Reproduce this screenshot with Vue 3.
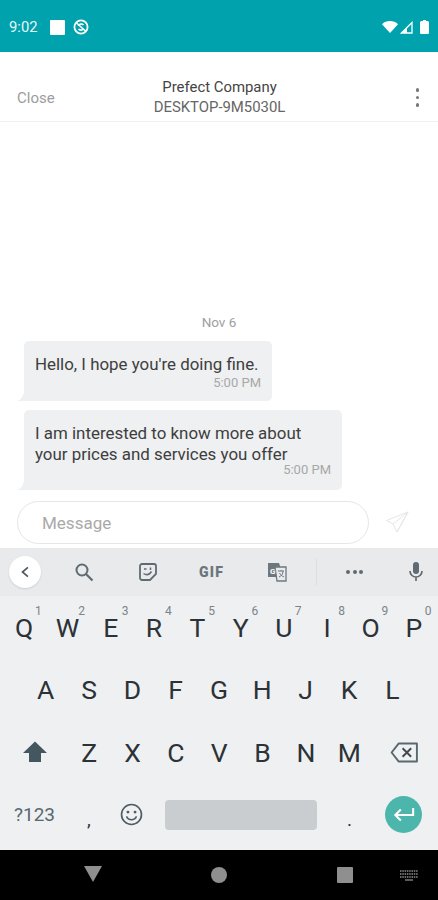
<script setup>
const rows = [
  ['Q', 'W', 'E', 'R', 'T', 'Y', 'U', 'I', 'O', 'P'],
  ['A', 'S', 'D', 'F', 'G', 'H', 'J', 'K', 'L'],
  ['Z', 'X', 'C', 'V', 'B', 'N', 'M']
]
const hints = ['1', '2', '3', '4', '5', '6', '7', '8', '9', '0']
</script>

<template>
  <div class="phone">
    <div class="status">
      <span class="time">9:02</span>
      <span class="square"></span>
      <svg class="sync" viewBox="0 0 16 16" width="16" height="16">
        <circle cx="8" cy="8" r="6.6" fill="none" stroke="#fff" stroke-width="1.8" />
        <path d="M3 3.5l10 9M5.5 7a3 3 0 0 1 5-1M10.500 9.500a3 3 0 0 1-5 .5" fill="none" stroke="#fff" stroke-width="1.6" />
      </svg>
      <span class="spacer"></span>
      <svg viewBox="0 0 16 12" width="16" height="12">
        <path d="M0 3.200C2 1.200 5 0 8 0s6 1.200 8 3.200L8 12z" fill="#fff" />
      </svg>
      <svg class="signal" viewBox="0 0 13 13" width="13" height="13">
        <path d="M12 1.500V12H1.500z" fill="none" stroke="#fff" stroke-width="1.300" />
        <path d="M7 7v5H1.500z" fill="#fff" />
      </svg>
      <svg viewBox="0 0 9 14" width="9" height="14">
        <path d="M3 0h3v1h1.500A1.500 1.500 0 0 1 9 2.500V13a1 1 0 0 1-1 1H1a1 1 0 0 1-1-1V2.500A1.500 1.500 0 0 1 1.500 1H3z" fill="#fff" />
      </svg>
    </div>

    <header class="topbar">
      <span class="close">Close</span>
      <div class="title">
        <span class="company">Prefect Company</span>
        <span class="device">DESKTOP-9M5030L</span>
      </div>
      <div class="dots"><i></i><i></i><i></i></div>
    </header>

    <main class="thread">
      <div class="date">Nov 6</div>
      <div class="bubble first">
        <p>Hello, I hope you're doing fine.</p>
        <time>5:00 PM</time>
      </div>
      <div class="bubble second">
        <p>I am interested to know more about<br />your prices and services you offer</p>
        <time>5:00 PM</time>
      </div>
    </main>

    <div class="composer">
      <div class="input">Message</div>
      <svg class="send" viewBox="0 0 24 24" width="24" height="24">
        <path d="M23 2L1.500 10.500l6.500 3.500 4 8zM8 14L23 2 12 22" fill="none" stroke="#e4e6e8" stroke-width="1" stroke-linejoin="round" />
      </svg>
    </div>

    <section class="keyboard">
      <div class="toolbar">
        <div class="back">
          <svg viewBox="0 0 12 14" width="10" height="12">
            <path d="M9.500 1.500L3 7l6.500 5.500" fill="none" stroke="#50585e" stroke-width="2" />
          </svg>
        </div>
        <svg class="tool search" viewBox="0 0 20 20" width="20" height="20">
          <circle cx="8" cy="8" r="5.500" fill="none" stroke="#5f6b72" stroke-width="2" />
          <path d="M12 12l6.500 6.500" stroke="#5f6b72" stroke-width="2.200" />
        </svg>
        <svg class="tool sticker" viewBox="0 0 20 20" width="20" height="20">
          <path d="M4 2h12a2 2 0 0 1 2 2v8l-6 6H4a2 2 0 0 1-2-2V4a2 2 0 0 1 2-2z" fill="none" stroke="#5f6b72" stroke-width="1.800" />
          <path d="M5.500 11.500c3 2 6 1 8-2M6 7h2.500M12.500 5.500v2.500" fill="none" stroke="#5f6b72" stroke-width="1.500" />
        </svg>
        <span class="gif">GIF</span>
        <svg class="tool translate" viewBox="0 0 20 20" width="20" height="20">
          <path d="M1 1h11l1 3v11H1z" fill="#6d787e" />
          <path d="M8 5h11v14H10z" fill="#e8eaed" stroke="#6d787e" stroke-width="1.300" />
          <text x="3" y="12" font-size="8" font-weight="700" font-family="Roboto, sans-serif" fill="#fff">G</text>
          <path d="M11 9h6M14 8v1M12 15c2.500-1 4-3 4-6M12.500 11c1 2 2.500 3 4.500 4" fill="none" stroke="#6d787e" stroke-width="1" />
        </svg>
        <span class="divider"></span>
        <div class="more"><i></i><i></i><i></i></div>
        <svg class="tool mic" viewBox="0 0 18 22" width="18" height="22">
          <rect x="6" y="1" width="6" height="12" rx="3" fill="#5f6b72" />
          <path d="M3 10a6 6 0 0 0 12 0M9 16v4" fill="none" stroke="#5f6b72" stroke-width="1.700" />
        </svg>
      </div>

      <div class="row top">
        <div v-for="(k, i) in rows[0]" :key="k" class="key">
          {{ k }}<sup class="hint">{{ hints[i] }}</sup>
        </div>
      </div>
      <div class="row middle">
        <div v-for="k in rows[1]" :key="k" class="key">{{ k }}</div>
      </div>
      <div class="row edge">
        <div class="wide">
          <svg viewBox="0 0 24 24" width="24" height="24">
            <path d="M12 1.500L24 13h-6v9H6v-9H0z" fill="#44565f" />
          </svg>
        </div>
        <div v-for="k in rows[2]" :key="k" class="key">{{ k }}</div>
        <div class="wide">
          <svg viewBox="0 0 30 22" width="29" height="21">
            <path d="M9 1.500h19v19H9L1.500 11z" fill="none" stroke="#5a686f" stroke-width="2" stroke-linejoin="round" />
            <path d="M13 6.500l9 9M22 6.500l-9 9" stroke="#3f4a50" stroke-width="2" />
          </svg>
        </div>
      </div>
      <div class="row edge">
        <div class="wide sym">?123</div>
        <div class="key comma">,</div>
        <div class="key">
          <svg viewBox="0 0 24 24" width="23" height="23">
            <circle cx="12" cy="12" r="10.400" fill="none" stroke="#4f5b62" stroke-width="1.700" />
            <circle cx="8.300" cy="9.500" r="1.500" fill="#4f5b62" />
            <circle cx="15.700" cy="9.500" r="1.500" fill="#4f5b62" />
            <path d="M6.800 14c1 2.400 3 3.500 5.200 3.500s4.200-1.100 5.200-3.500" fill="none" stroke="#4f5b62" stroke-width="1.600" />
          </svg>
        </div>
        <div class="space-cell"><div class="space"></div></div>
        <div class="key period">.</div>
        <div class="wide">
          <div class="enter">
            <svg viewBox="0 0 24 16" width="22" height="15">
              <path d="M22 1v7.500H3M8.500 2.500L2.500 8.500l6 6" fill="none" stroke="#fff" stroke-width="2.200" />
            </svg>
          </div>
        </div>
      </div>
    </section>

    <nav class="navbar">
      <span class="nav-back"></span>
      <span class="nav-home"></span>
      <span class="nav-recent"></span>
      <svg class="nav-kb" viewBox="0 0 18 11" width="18" height="11">
        <path d="M0 1h18M0 4h18M0 7h18" stroke="#8d8d8d" stroke-width="1.300" stroke-dasharray="1.500 .8" />
        <path d="M5 10h8" stroke="#8d8d8d" stroke-width="1.300" />
      </svg>
    </nav>
  </div>
</template>

<style scoped>
.phone {
  width: 438px;
  height: 900px;
  display: flex;
  flex-direction: column;
  overflow: hidden;
  background: #fff;
  font-family: Roboto, "Liberation Sans", sans-serif;
}

.status {
  height: 52px;
  flex: none;
  display: flex;
  align-items: center;
  padding: 2px 9px 0 9px;
  box-sizing: border-box;
  background: #00a3ad;
  color: #fff;
}
.time { font-size: 14.800px; color: #e6f6f7; }
.square { width: 15px; height: 15px; margin-left: 12px; background: #fff; border-radius: 1px; }
.sync { margin-left: 8px; }
.spacer { flex: 1; }
.signal { margin: 0 7px 0 2px; }

.topbar {
  height: 70px;
  flex: none;
  box-sizing: border-box;
  display: grid;
  grid-template-columns: 1fr auto 1fr;
  align-items: center;
  padding: 22px 16px 0 17px;
  border-bottom: 1px solid #f0f0f0;
}
.close { font-size: 15px; color: #9c9c9c; }
.title { display: flex; flex-direction: column; align-items: center; line-height: 20px; margin-bottom: 2px; }
.company { font-size: 14.900px; color: #444; }
.device { font-size: 14.900px; color: #666; }
.dots { justify-self: end; display: flex; flex-direction: column; gap: 4px; margin-right: 3px; }
.dots i { width: 3.500px; height: 3.500px; border-radius: 50%; background: #777; }

.thread {
  flex: 1;
  min-height: 0;
  display: flex;
  flex-direction: column;
  justify-content: flex-end;
  align-items: flex-start;
  padding: 0 24px 10px;
}
.date { align-self: center; margin: 0 0 11px 0; font-size: 13.500px; color: #a0a0a0; }
.bubble {
  position: relative;
  flex: none;
  box-sizing: border-box;
  background: #eef0f1;
  border-radius: 5px 5px 5px 0;
  padding: 13px 11px 0;
  color: #3e3e3e;
}
.bubble::before {
  content: "";
  position: absolute;
  left: -8px;
  bottom: 0;
  width: 8px;
  height: 10px;
  background: radial-gradient(ellipse 8px 10px at 0 0, transparent 96%, #eef0f1 100%);
}
.bubble p { margin: 0; font-size: 16.900px; line-height: 20.500px; white-space: nowrap; }
.bubble time { display: block; text-align: right; font-size: 13px; line-height: 15px; color: #a8a8a8; }
.first { width: 248px; height: 60px; margin-bottom: 9px; }
.second { width: 318px; height: 80px; }
.second time { margin-top: -2px; }

.composer {
  height: 48px;
  flex: none;
  box-sizing: border-box;
  padding: 1px 0 0 17px;
  display: flex;
  align-items: flex-start;
}
.input {
  width: 352px;
  height: 43px;
  box-sizing: border-box;
  border: 1px solid #e4e6e8;
  border-radius: 22px;
  padding-left: 24px;
  display: flex;
  align-items: center;
  font-size: 17px;
  color: #a9a9a9;
}
.send { margin: 9px 0 0 16px; }

.keyboard {
  height: 302px;
  flex: none;
  background: #eef0f2;
  display: flex;
  flex-direction: column;
}
.toolbar {
  height: 48px;
  flex: none;
  background: #e8eaeb;
  display: flex;
  align-items: center;
}
.back {
  width: 32px;
  height: 32px;
  margin-left: 9px;
  border-radius: 50%;
  background: #fff;
  display: flex;
  align-items: center;
  justify-content: center;
  box-shadow: 0 1px 2px rgba(0, 0, 0, 0.12);
}
.search { margin-left: 33px; }
.sticker { margin-left: 44px; }
.gif { margin-left: 41px; font-size: 14px; font-weight: 900; letter-spacing: 1.200px; color: #6b767c; width: 34px; }
.translate { margin-left: 34px; }
.divider { width: 1px; height: 26px; margin-left: 29px; background: #dcdfe1; }
.more { display: flex; gap: 2.500px; margin-left: 29px; }
.more i { width: 4px; height: 4px; border-radius: 50%; background: #5f6b72; }
.mic { margin-left: 44px; }

.row { height: 62.500px; flex: none; display: flex; align-items: center; }
.top { padding: 0 2.500px; }
.middle { padding: 0 24px; }
.edge { padding: 0 1px 0 1.500px; }
.key {
  position: relative;
  flex: 1;
  min-width: 0;
  height: 100%;
  display: flex;
  align-items: center;
  justify-content: center;
  font-size: 26.500px;
  color: #2c3236;
}
.hint {
  position: absolute;
  top: 8px;
  right: 4px;
  font-size: 12px;
  line-height: 14px;
  color: #7b8489;
}
.wide {
  width: 66px;
  height: 100%;
  flex: none;
  display: flex;
  align-items: center;
  justify-content: center;
}
.sym { font-size: 19px; color: #5a686f; }
.comma, .period { font-size: 19px; padding-top: 10px; box-sizing: border-box; }
.space-cell {
  width: 175px;
  flex: none;
  display: flex;
  justify-content: center;
}
.space { width: 152px; height: 30px; border-radius: 4px; background: #c9cdd0; }
.enter {
  width: 37px;
  height: 37px;
  border-radius: 50%;
  background: #4db6ac;
  display: flex;
  align-items: center;
  justify-content: center;
}

.navbar {
  height: 50px;
  flex: none;
  background: #000;
  display: flex;
  align-items: center;
}
.nav-back {
  margin: -3px 0 0 84px;
  width: 0;
  height: 0;
  border-left: 9px solid transparent;
  border-right: 9px solid transparent;
  border-top: 16px solid #8f8f8f;
}
.nav-home { margin-left: 109px; width: 16px; height: 16px; border-radius: 50%; background: #8f8f8f; }
.nav-recent { margin-left: 110px; width: 16px; height: 16px; background: #8f8f8f; border-radius: 1px; }
.nav-kb { margin-left: 47px; }
</style>

<style>
html, body { margin: 0; background: #fff; }
</style>
